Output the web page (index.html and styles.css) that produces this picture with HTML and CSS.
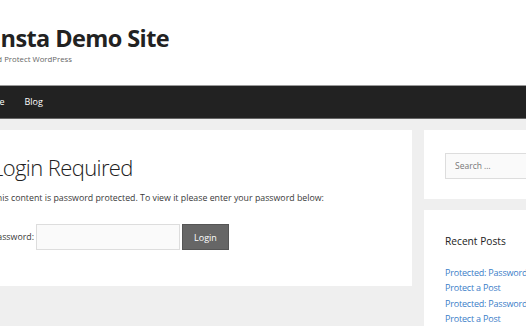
FILE: index.html
```html
<!DOCTYPE html>
<html lang="en">
<head>
<meta charset="utf-8">
<title>Kinsta Demo Site</title>
<link rel="stylesheet" href="styles.css">
</head>
<body>
<header class="site-header">
  <div class="site-branding">
    <p class="site-title">Kinsta Demo Site</p>
    <p class="site-description">Password Protect WordPress</p>
  </div>
</header>
<nav class="main-nav">
  <ul class="menu">
    <li><a href="#">Home</a></li>
    <li><a href="#">Blog</a></li>
  </ul>
</nav>
<div class="site-content">
  <main class="content-area">
    <article class="entry">
      <h1 class="entry-title">Login Required</h1>
      <p class="entry-text">This content is password protected. To view it please enter your password below:</p>
      <form class="post-password-form">
        <label class="pw-label">Password: <input class="pw-input" type="password"></label>
        <button class="pw-submit" type="button">Login</button>
      </form>
    </article>
  </main>
  <aside class="sidebar">
    <section class="widget widget-search">
      <input class="search-field" type="search" placeholder="Search …">
    </section>
    <section class="widget widget-recent">
      <h2 class="widget-title">Recent Posts</h2>
      <ul class="recent-list">
        <li><a href="#">Protected: Password Protect a Post</a></li>
        <li><a href="#">Protected: Password Protect a Post</a></li>
      </ul>
    </section>
  </aside>
</div>
</body>
</html>
```
FILE: styles.css
```css
* { box-sizing: border-box; }
html, body { margin: 0; padding: 0; }
body {
  background: #efefef;
  font-family: "Open Sans", "Noto Sans", sans-serif;
  color: #3a3a3a;
  overflow: hidden;
  width: 526px;
  height: 326px;
}
.site-header {
  background: #fff;
  height: 85px;
  padding-top: 21px;
}
.site-branding { margin-left: -21px; }
.site-title {
  margin: 0;
  font-size: 23.5px;
  font-weight: 700;
  letter-spacing: -0.6px;
  line-height: 34px;
  color: #222;
}
.site-description {
  margin: -2.5px 0 0 -12px;
  font-size: 7.8px;
  line-height: 12px;
  color: #666;
}
.main-nav {
  background: #222;
  border-top: 1px solid #9a9a9a;
  border-bottom: 1px solid #666;
  height: 34px;
}
.menu {
  list-style: none;
  margin: 0 0 0 -21px;
  padding: 0;
  display: flex;
  gap: 20px;
}
.menu a {
  display: block;
  line-height: 32px;
  font-size: 9px;
  color: #fff;
  text-decoration: none;
}
.site-content {
  display: flex;
  gap: 12px;
  padding-top: 11px;
}
.content-area {
  flex: 0 0 444px;
  margin-left: -32px;
  background: #fff;
  height: 156px;
  padding: 22px 0 0 24px;
}
.entry-title {
  margin: 0;
  font-size: 22px;
  font-weight: 300;
  letter-spacing: -0.6px;
  line-height: 30px;
  color: #222;
}
.entry-text {
  margin: 8px 0 0;
  font-size: 8.8px;
  line-height: 16px;
  color: #3a3a3a;
}
.post-password-form {
  display: flex;
  align-items: center;
  gap: 2px;
  margin-top: 18px;
}
.pw-label {
  display: flex;
  align-items: center;
  gap: 2px;
  font-size: 8.8px;
  color: #3a3a3a;
}
.pw-input {
  width: 144px;
  height: 26px;
  background: #fafafa;
  border: 1px solid #ddd;
  margin: 0;
}
.pw-submit {
  width: 47px;
  height: 26px;
  background: #666;
  border: 1px solid #555;
  color: #fff;
  font-family: inherit;
  font-size: 9px;
  padding: 0;
}
.sidebar {
  display: flex;
  flex-direction: column;
  gap: 11px;
  flex: 0 0 auto;
  width: 140px;
}
.widget {
  background: #fff;
  padding: 21px 0 0 21px;
}
.widget-search { height: 69px; padding-top: 22px; }
.search-field {
  width: 130px;
  height: 26px;
  background: #fafafa;
  border: 1px solid #ddd;
  padding: 0 9px;
  font-family: inherit;
  font-size: 8.5px;
  color: #666;
  margin: 0;
}
.search-field::placeholder { color: #777; }
.widget-recent { height: 140px; padding-top: 22px; }
.widget-title {
  margin: 0;
  font-size: 10.2px;
  font-weight: 400;
  line-height: 18px;
  color: #222;
}
.recent-list {
  list-style: none;
  margin: 14.5px 0 0;
  padding: 0;
  width: 100px;
}
.recent-list li {
  font-size: 9px;
  letter-spacing: -0.2px;
  line-height: 15px;
  margin-bottom: 1px;
}
.recent-list a { color: #3b7ec8; text-decoration: none; }
```
